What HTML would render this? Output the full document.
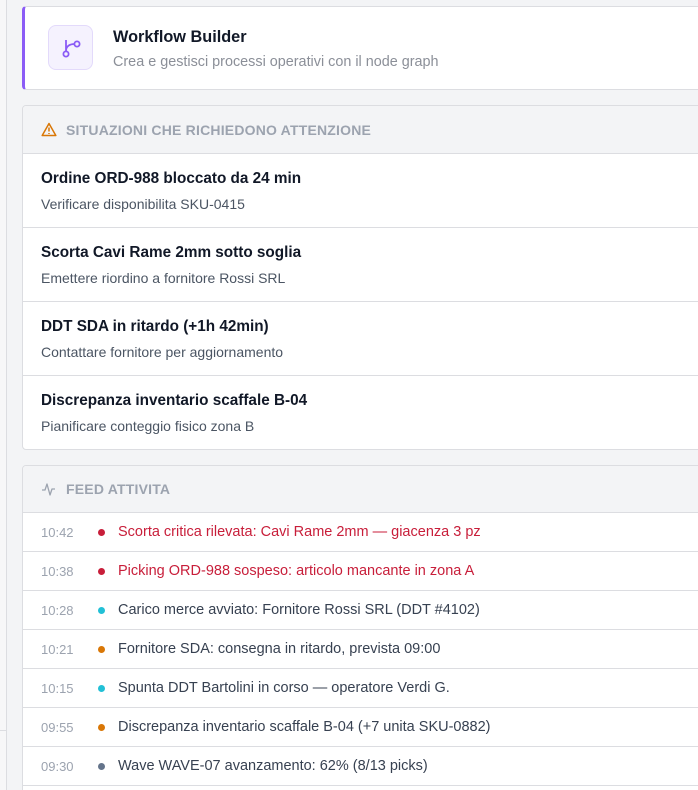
<!DOCTYPE html>
<html><head><meta charset="utf-8"><style>
*{box-sizing:border-box;margin:0;padding:0}
html,body{width:698px;height:790px;overflow:hidden}
body{background:#f3f4f6;font-family:"Liberation Sans",sans-serif;position:relative}
.side{position:absolute;left:0;top:0;width:7px;height:790px;background:#f7f7f8;border-right:1px solid #dcdde1}
.hl{position:absolute;left:0;top:730px;width:7px;height:1px;background:#dcdde1}
.card{position:absolute;left:22px;width:700px;background:#fff;border:1px solid #dcdde1;border-radius:4px;overflow:hidden}
.hdr{top:6px;height:84px;border-left:3px solid #8b5cf6}
.ib{position:absolute;left:23px;top:18px;width:45px;height:45px;border:1px solid #e3dafb;background:#f5f2fe;border-radius:8px}
.t1{position:absolute;left:88px;top:21px;font-size:16.3px;font-weight:bold;color:#111827}
.t2{position:absolute;left:88px;top:47px;font-size:14.4px;color:#8b8f98}
.ch{height:48px;background:#f3f4f6;border-bottom:1px solid #dcdde1;display:flex;align-items:center;padding-left:18px;font-size:14px;font-weight:bold;color:#9ca3af;letter-spacing:.2px}
.ch svg{margin-right:9px}
.ar{height:74px;border-bottom:1px solid #dcdde1;padding:15px 0 0 18px}
.ar:last-child{border-bottom:none}
.ar b{display:block;font-size:15.3px;color:#111827;margin-top:1px}
.ar span{display:block;font-size:14px;color:#4b5563;margin-top:8px}
.fr{height:39px;border-bottom:1px solid #dcdde1;display:flex;align-items:center;font-size:14.5px;color:#374151}
.fr .tm{width:75px;padding-left:18px;font-size:13px;color:#9ca3af}
.fr i{width:7px;height:7px;border-radius:50%;display:inline-block;margin-right:13px}
.red{color:#c81e3a}
</style></head><body>
<div class="side"></div><div class="hl"></div>
<div class="card hdr">
<div class="ib"><svg width="45" height="45" viewBox="0 0 45 45"><g fill="none" stroke="#8b5cf6" stroke-width="1.8"><circle cx="17" cy="28" r="2.6"/><circle cx="28" cy="18" r="2.6"/><path d="M17 14v11.4M17 25c0-5 4-7 8.5-7"/></g></svg></div>
<div class="t1">Workflow Builder</div>
<div class="t2">Crea e gestisci processi operativi con il node graph</div>
</div>
<div class="card" style="top:105px;height:345px">
<div class="ch"><svg width="16" height="15" viewBox="0 0 16 15"><path d="M8 1.5L14.8 13.5H1.2Z" fill="none" stroke="#d97706" stroke-width="1.5" stroke-linejoin="round"/><path d="M8 5.5v4M8 11v1" stroke="#d97706" stroke-width="1.5"/></svg>SITUAZIONI CHE RICHIEDONO ATTENZIONE</div>
<div class="ar"><b>Ordine ORD-988 bloccato da 24 min</b><span>Verificare disponibilita SKU-0415</span></div>
<div class="ar"><b>Scorta Cavi Rame 2mm sotto soglia</b><span>Emettere riordino a fornitore Rossi SRL</span></div>
<div class="ar"><b>DDT SDA in ritardo (+1h 42min)</b><span>Contattare fornitore per aggiornamento</span></div>
<div class="ar"><b>Discrepanza inventario scaffale B-04</b><span>Pianificare conteggio fisico zona B</span></div>
</div>
<div class="card" style="top:465px;height:340px">
<div class="ch" style="height:47px"><svg width="16" height="16" viewBox="0 0 16 16"><path d="M1 9h3l2-6 3 11 2-6h3" fill="none" stroke="#9ca3af" stroke-width="1.3" stroke-linejoin="round"/></svg>FEED ATTIVITA</div>
<div class="fr"><span class="tm">10:42</span><i style="background:#c81e3a"></i><span class="red">Scorta critica rilevata: Cavi Rame 2mm — giacenza 3 pz</span></div>
<div class="fr"><span class="tm">10:38</span><i style="background:#c81e3a"></i><span class="red">Picking ORD-988 sospeso: articolo mancante in zona A</span></div>
<div class="fr"><span class="tm">10:28</span><i style="background:#22c0d6"></i><span>Carico merce avviato: Fornitore Rossi SRL (DDT #4102)</span></div>
<div class="fr"><span class="tm">10:21</span><i style="background:#d97706"></i><span>Fornitore SDA: consegna in ritardo, prevista 09:00</span></div>
<div class="fr"><span class="tm">10:15</span><i style="background:#22c0d6"></i><span>Spunta DDT Bartolini in corso — operatore Verdi G.</span></div>
<div class="fr"><span class="tm">09:55</span><i style="background:#d97706"></i><span>Discrepanza inventario scaffale B-04 (+7 unita SKU-0882)</span></div>
<div class="fr"><span class="tm">09:30</span><i style="background:#64748b"></i><span>Wave WAVE-07 avanzamento: 62% (8/13 picks)</span></div>
</div>
</body></html>
